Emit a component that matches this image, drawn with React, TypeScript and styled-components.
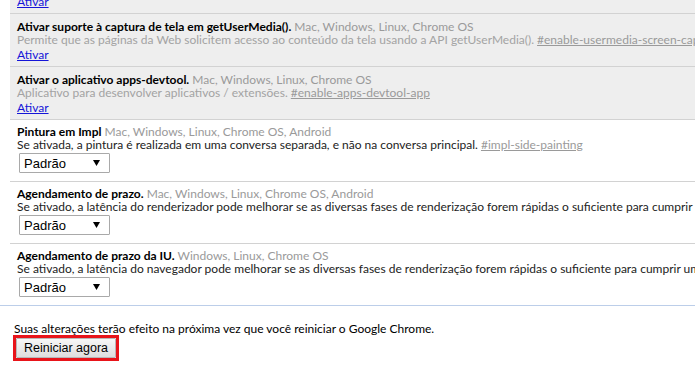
import React from "react";
import styled, { createGlobalStyle } from "styled-components";

const GlobalStyle = createGlobalStyle`
  html, body {
    margin: 0;
    padding: 0;
    background: #ffffff;
    overflow: hidden;
  }
  body {
    font-family: Lato, "Noto Sans", sans-serif;
    font-size: 12px;
    color: #000;
  }
`;

const Page = styled.div`
  width: 1200px;
`;

const List = styled.div`
  margin-left: 10px;
  margin-top: -7px;
`;

const Experiment = styled.div<{ $muted?: boolean }>`
  background: ${(p) => (p.$muted ? "#eeeeee" : "#ffffff")};
  border-top: 1px solid #d2d2d2;
  padding: ${(p) => (p.$muted ? "6px 7px 5px" : "5px 7px 8px")};
  white-space: nowrap;
  &:first-child {
    border-top: none;
    padding-top: 0;
  }
`;

const TitleLine = styled.div`
  line-height: 13px;
`;

const Name = styled.span`
  font-weight: bold;
  color: #000;
`;

const Platforms = styled.span`
  color: #9a9a9a;
`;

const Desc = styled.div<{ $muted?: boolean }>`
  line-height: 13px;
  color: ${(p) => (p.$muted ? "#a3a3a3" : "#222222")};
`;

const FlagLink = styled.a`
  color: #9a9a9a;
  text-decoration: underline;
`;

const Action = styled.div`
  margin-top: 2px;
  line-height: 13px;
`;

const EnableLink = styled.a`
  color: #1515d8;
  text-decoration: underline;
  cursor: pointer;
`;

const SelectWrap = styled.div`
  margin: 2px 0 0 2px;
  position: relative;
  width: 91px;
  height: 20px;
`;

const Select = styled.select`
  appearance: none;
  -webkit-appearance: none;
  width: 91px;
  height: 20px;
  margin: 0;
  padding: 0 0 0 4px;
  border: 1px solid #a9a9a9;
  border-radius: 1px;
  background: #ffffff;
  font-family: "Liberation Sans", Arial, sans-serif;
  font-size: 13px;
  color: #000;
`;

const Arrow = styled.svg`
  position: absolute;
  right: 10px;
  top: 7px;
  pointer-events: none;
`;

const Footer = styled.div`
  border-top: 1px solid #bccee9;
  padding: 16px 13px 0;
`;

const Notice = styled.div`
  line-height: 13px;
  white-space: nowrap;
  padding-left: 1px;
`;

const Highlight = styled.div`
  display: inline-block;
  margin-top: 0;
  border: 3px solid #e8141a;
`;

const RestartButton = styled.button`
  display: block;
  height: 20px;
  margin: 0;
  padding: 0 7px;
  border: 1px solid #b8b8b8;
  border-radius: 1px;
  background: linear-gradient(#f7f7f7, #dedede);
  font-family: "Liberation Sans", Arial, sans-serif;
  font-size: 12.5px;
  color: #000;
  line-height: 18px;
`;

type Flag = {
  name: string;
  platforms: string;
  desc: string;
  flag: string;
  kind: "enable" | "select";
};

const flags: Flag[] = [
  {
    name: "Ativar suporte à captura de tela em getUserMedia().",
    platforms: "Mac, Windows, Linux, Chrome OS",
    desc: "Permite que as páginas da Web solicitem acesso ao conteúdo da tela usando a API getUserMedia().",
    flag: "#enable-usermedia-screen-capture",
    kind: "enable",
  },
  {
    name: "Ativar o aplicativo apps-devtool.",
    platforms: "Mac, Windows, Linux, Chrome OS",
    desc: "Aplicativo para desenvolver aplicativos / extensões.",
    flag: "#enable-apps-devtool-app",
    kind: "enable",
  },
  {
    name: "Pintura em Impl",
    platforms: "Mac, Windows, Linux, Chrome OS, Android",
    desc: "Se ativada, a pintura é realizada em uma conversa separada, e não na conversa principal.",
    flag: "#impl-side-painting",
    kind: "select",
  },
  {
    name: "Agendamento de prazo.",
    platforms: "Mac, Windows, Linux, Chrome OS, Android",
    desc: "Se ativado, a latência do renderizador pode melhorar se as diversas fases de renderização forem rápidas o suficiente para cumprir um prazo.",
    flag: "#enable-deadline-scheduling",
    kind: "select",
  },
  {
    name: "Agendamento de prazo da IU.",
    platforms: "Windows, Linux, Chrome OS",
    desc: "Se ativado, a latência do navegador pode melhorar se as diversas fases de renderização forem rápidas o suficiente para cumprir um prazo.",
    flag: "#enable-ui-deadline-scheduling",
    kind: "select",
  },
];

function DefaultSelect() {
  return (
    <SelectWrap>
      <Select defaultValue="default">
        <option value="default">Padrão</option>
        <option value="on">Ativado</option>
        <option value="off">Desativado</option>
      </Select>
      <Arrow width="7" height="6" viewBox="0 0 7 6">
        <path d="M0 0 L7 0 L3.5 6 Z" fill="#000" />
      </Arrow>
    </SelectWrap>
  );
}

export default function App() {
  return (
    <Page>
      <GlobalStyle />
      <List>
        <Experiment $muted>
          <Action>
            <EnableLink>Ativar</EnableLink>
          </Action>
        </Experiment>
        {flags.map((f) => {
          const muted = f.kind === "enable";
          return (
            <Experiment key={f.flag} $muted={muted}>
              <TitleLine>
                <Name>{f.name}</Name> <Platforms>{f.platforms}</Platforms>
              </TitleLine>
              <Desc $muted={muted}>
                {f.desc} <FlagLink>{f.flag}</FlagLink>
              </Desc>
              {f.kind === "enable" ? (
                <Action>
                  <EnableLink>Ativar</EnableLink>
                </Action>
              ) : (
                <DefaultSelect />
              )}
            </Experiment>
          );
        })}
      </List>
      <Footer>
        <Notice>
          Suas alterações terão efeito na próxima vez que você reiniciar o Google Chrome.
        </Notice>
        <Highlight>
          <RestartButton>Reiniciar agora</RestartButton>
        </Highlight>
      </Footer>
    </Page>
  );
}
